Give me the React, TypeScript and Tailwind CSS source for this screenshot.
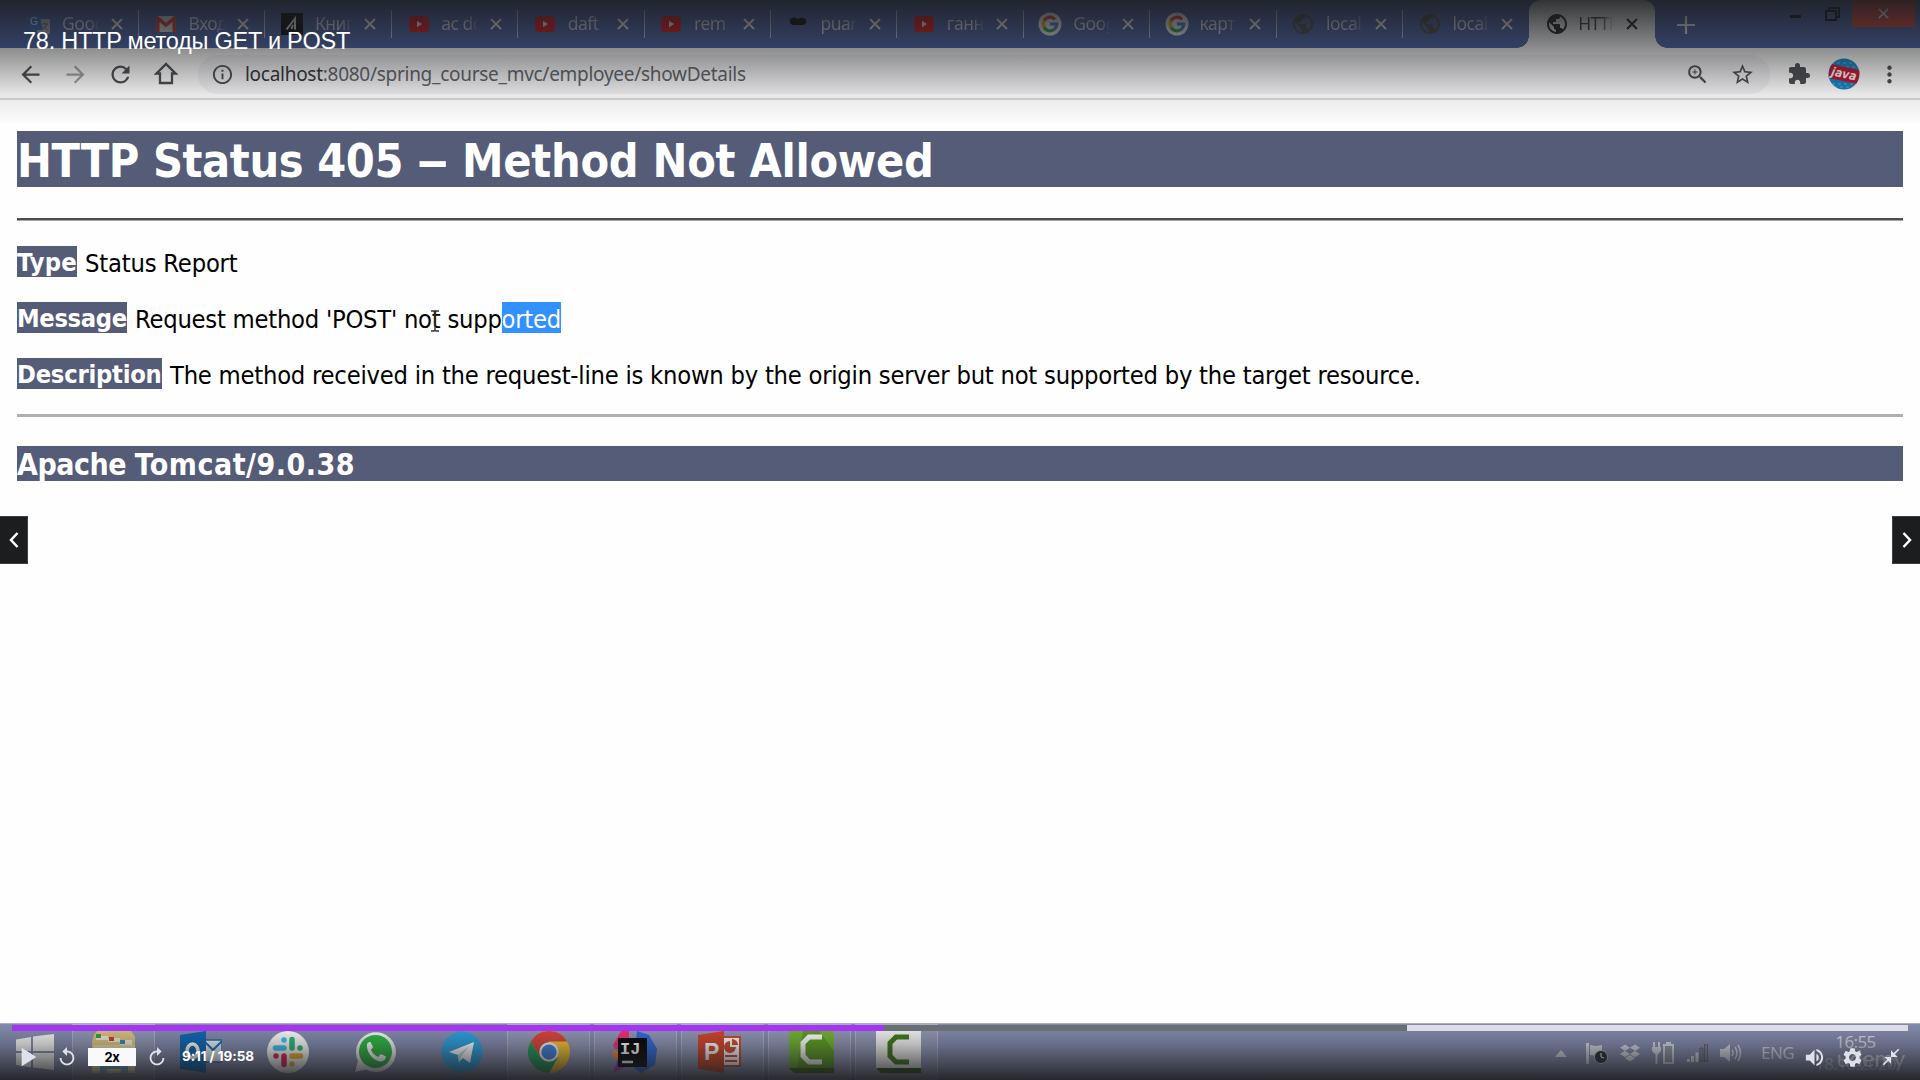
import type { ReactNode } from 'react';
import {
  MdArrowBack, MdArrowForward, MdRefresh, MdInfoOutline, MdZoomIn, MdStarBorder, MdExtension,
  MdMoreVert, MdPublic, MdReplay, MdPlayArrow, MdVolumeUp, MdSettings, MdCloseFullscreen,
} from 'react-icons/md';
import { FaDropbox } from 'react-icons/fa6';

const YouTube = () => (
  <svg viewBox="0 0 20 16" className="h-4 w-5">
    <rect width="20" height="16" rx="4" fill="#e8141c" />
    <path d="M8 4.8v6.4l5-3.2z" fill="#fff" />
  </svg>
);

const Gmail = () => (
  <svg viewBox="0 0 20 16" className="h-4 w-5">
    <rect width="20" height="16" rx="1.5" fill="#e6e6e6" />
    <path d="M1.8 16V2.2L10 9l8.2-6.8V16" fill="none" stroke="#dd3b30" strokeWidth="3.4" />
  </svg>
);

const Translate = () => (
  <svg viewBox="0 0 22 20" className="h-5 w-[22px]">
    <rect x="9" y="5" width="13" height="15" rx="1" fill="#b9bdc4" />
    <path d="M1 0h10l4 16H1z" fill="#3a6fd8" />
    <text x="2" y="11" fontSize="10" fontFamily="Liberation Sans" fill="#fff">G</text>
    <path d="M14 10h6M17 8.5v1.5M19 10c-.6 2.5-2 4-4 5M15.5 12l4 4" stroke="#666" fill="none" />
  </svg>
);

const Book = () => (
  <svg viewBox="0 0 22 22" className="size-[22px]">
    <rect width="22" height="22" fill="#050608" />
    <path d="M5.500 16.500 14 5.500V16.500M10.500 16 12 12" stroke="#eee" strokeWidth="2" fill="none" />
  </svg>
);

const Mustache = () => (
  <svg viewBox="0 0 18 16" className="h-4 w-[18px]">
    <path d="M1 3q4-3 8 0 4-3 8 0 1 6-4 6H5Q0 9 1 3z" fill="#05070d" />
  </svg>
);

const Google = () => (
  <svg viewBox="0 0 24 24" className="size-6">
    <circle cx="12" cy="12" r="11.5" fill="#fff" />
    <g fill="none" strokeWidth="3.2">
      <path d="M17 7.4A6.8 6.8 0 0 0 6.1 8.6" stroke="#ea4335" />
      <path d="M6.1 8.6a6.8 6.8 0 0 0 0 6.8" stroke="#fbbc05" />
      <path d="M6.1 15.4a6.8 6.8 0 0 0 10.4 1.7" stroke="#34a853" />
      <path d="M16.5 17.1A6.8 6.8 0 0 0 18.8 12H12" stroke="#4285f4" />
    </g>
  </svg>
);

const Close = ({ className }: { className: string }) => (
  <svg viewBox="0 0 12 12" className={className}>
    <path d="M1 1l10 10M11 1L1 11" stroke="currentColor" strokeWidth="2" />
  </svg>
);

const Globe = () => <MdPublic className="size-6 text-[#4a4f45]" />;

const tabs: { icon: ReactNode; title: string }[] = [
  { icon: <Translate />, title: 'Goog' },
  { icon: <Gmail />, title: 'Вход' },
  { icon: <Book />, title: 'Книг' },
  { icon: <YouTube />, title: 'ac do' },
  { icon: <YouTube />, title: 'daft |' },
  { icon: <YouTube />, title: 'rem' },
  { icon: <Mustache />, title: 'puar' },
  { icon: <YouTube />, title: 'ганн' },
  { icon: <Google />, title: 'Goog' },
  { icon: <Google />, title: 'карт' },
  { icon: <Globe />, title: 'local' },
  { icon: <Globe />, title: 'local' },
];

function TabStrip() {
  return (
    <div className="flex h-12 bg-[#4c66ae] pl-[12.6px] font-['Noto_Sans',sans-serif] text-[17.5px] leading-none">
      {tabs.map((t, i) => (
        <div key={i} className="flex h-full w-[126.4px] shrink-0 items-center">
          <span className="flex w-[49.5px] shrink-0 justify-center pl-1">{t.icon}</span>
          <span className="w-10 whitespace-nowrap bg-linear-to-r from-[#e6e9f0] from-65% to-transparent to-95% bg-clip-text py-1 tracking-[-0.5px] text-transparent">
            {t.title}
          </span>
          <Close className="ml-[9px] size-3 text-white" />
          <span className={i === tabs.length - 1 ? 'hidden' : 'ml-auto h-7 w-px bg-[#c8d0e8]'} />
        </div>
      ))}
      <div className="relative flex h-full w-[126px] shrink-0 items-center rounded-t-xl bg-white">
        <span className="absolute bottom-0 -left-3 size-3 bg-[radial-gradient(circle_at_0_0,transparent_11.5px,white_12px)]" />
        <span className="absolute -right-3 bottom-0 size-3 bg-[radial-gradient(circle_at_100%_0,transparent_11.5px,white_12px)]" />
        <span className="flex w-[49px] shrink-0 justify-center pl-1.5"><MdPublic className="size-6 text-[#202124]" /></span>
        <span className="w-10 whitespace-nowrap bg-linear-to-r from-[#3c4043] from-55% to-transparent to-90% bg-clip-text py-1 tracking-[-0.8px] text-transparent">
          HTTP
        </span>
        <Close className="ml-2 size-3 text-[#202124]" />
      </div>
      <svg viewBox="0 0 18 18" className="mt-4 ml-[22px] size-[18px] shrink-0"><path d="M9 0v18M0 9h18" stroke="#fff" strokeWidth="2.2" /></svg>
      <div className="ml-auto flex h-7 items-center">
        <span className="mt-1 mr-6 h-[3px] w-[11px] bg-[#10131f]" />
        <svg viewBox="0 0 15 14" className="mr-3 h-3.5 w-[15px]"><path d="M1 4h10v9H1zM4 4V1h10v9h-3" fill="none" stroke="#10131f" strokeWidth="2" /></svg>
        <div className="mr-[5px] flex h-[27px] w-[63px] items-center justify-center self-start bg-[#e0463f]">
          <Close className="size-[11px] text-white" />
        </div>
      </div>
    </div>
  );
}

function AddressBar() {
  return (
    <div className="flex h-[52px] items-center border-b-2 border-[#d9dadb] bg-white pt-0.5 text-[#4b4d51]">
      <MdArrowBack className="ml-[17px] size-[27px]" />
      <MdArrowForward className="ml-[18px] size-[27px] text-[#a3a4a7]" />
      <MdRefresh className="ml-[18px] size-[27px]" />
      <svg viewBox="0 0 24 24" className="ml-[20px] size-6">
        <path d="M12 2 2.5 11.5H6V21h12v-9.5h3.5z" fill="none" stroke="currentColor" strokeWidth="2.3" />
      </svg>
      <div className="ml-5 flex h-[39px] w-[1572px] items-center rounded-full bg-[#f4f4f6] pl-[13px]">
        <MdInfoOutline className="size-[23px]" />
        <span className="ml-[11px] font-['Noto_Sans',sans-serif] text-[19px] leading-none tracking-[-0.28px] text-[#5f6368]">
          <span className="text-[#303236]">localhost</span>:8080/spring_course_mvc/employee/showDetails
        </span>
        <MdZoomIn className="ml-auto size-[25px]" />
        <MdStarBorder className="mr-[15px] ml-5 size-[25px]" />
      </div>
      <MdExtension className="ml-[17px] size-6" />
      <svg viewBox="0 0 32 32" className="ml-[17px] size-8">
        <defs><clipPath id="avatar"><circle cx="16" cy="16" r="15.5" /></clipPath></defs>
        <g clipPath="url(#avatar)">
          <rect width="32" height="32" fill="#1783c4" />
          <path d="M0 9h32M3 5h28M4 26h25M0 29h32" stroke="#5cb6e0" strokeDasharray="3 3" />
          <g transform="rotate(12 16 16)">
            <rect x="1" y="9" width="30" height="14" fill="#c8122c" />
            <text x="16" y="20" textAnchor="middle" fontSize="12" fontWeight="700" fontStyle="italic" fontFamily="DejaVu Sans Condensed" fill="#fff">java</text>
          </g>
        </g>
      </svg>
      <MdMoreVert className="ml-4 size-[27px]" />
    </div>
  );
}

const Label = ({ className, children }: { className: string; children: ReactNode }) => (
  <b className={'flex h-[31px] shrink-0 items-center bg-[#545c78] pt-[3px] leading-none text-white ' + className}>{children}</b>
);

function ErrorPage() {
  return (
    <div className="h-[923px] bg-[#fefefe] px-[17px] pt-[31px] font-['DejaVu_Sans_Condensed','DejaVu_Sans',sans-serif] text-black">
      <h1 className="h-14 bg-[#545c78] text-[46.4px] leading-[60px] font-bold tracking-[-0.3px] whitespace-nowrap text-white">
        <span className="tracking-[-0.42px]">HTTP Status 405</span>
        <span className="inline-block w-[59px] scale-x-[1.6] text-center whitespace-pre"> – </span>
        <span>Method Not Allowed</span>
      </h1>
      <div className="mt-[31px] h-[3px] border-b border-[#a5a5ab] bg-[#4c4c55]" />
      <div className="mt-[25px] flex flex-col gap-[25px] text-[25.3px] leading-[35px] whitespace-nowrap">
        <p className="flex h-[31px] tracking-[-0.2px]"><Label className="mr-2 w-[60px] tracking-[0.2px]">Type</Label>Status Report</p>
        <p className="relative flex h-[31px] tracking-[-0.25px]">
          <Label className="mr-2 w-[110px] tracking-[-0.35px]">Message</Label>
          <span>Request method 'POST' not supp</span>
          <span className="h-[31px] bg-[#3390ff] text-white">orted</span>
          <svg viewBox="0 0 10 22" className="absolute top-2 left-[413px] h-[22px] w-2.5">
            <path d="M1 1h3l1 1 1-1h3M5 2v18M1 21h3l1-1 1 1h3" fill="none" stroke="#333" strokeWidth="1.4" />
          </svg>
        </p>
        <p className="flex h-[31px] tracking-[-0.24px]">
          <Label className="mr-2 w-[145px]">Description</Label>
          The method received in the request-line is known by the origin server but not supported by the target resource.
        </p>
      </div>
      <div className="mt-[25px] h-[3px] bg-[#b0b0b0]" />
      <h3 className="mt-[29px] h-[35px] bg-[#545c78] text-[30px] leading-[37px] font-bold tracking-[0.5px] text-white">
        <span className="tracking-[-0.5px]">Apache </span>Tomcat/9.0.38
      </h3>
    </div>
  );
}

const Explorer = () => (
  <svg viewBox="0 0 48 42" className="h-[42px] w-12">
    <path d="M4 4l3-4h34l4 6v36H2V10z" fill="#d9c383" />
    <path d="M6 5h12v4H6zM18 7h12v4H18zM30 9h12v5H30z" fill="#f1ead2" />
    <path d="M6 3h5v4H6z" fill="#3f9c46" /><path d="M19 6h5v4h-5z" fill="#c6442e" /><path d="M30 9h5v4h-5z" fill="#3a86c0" />
    <path d="M3 14h42v26H3z" fill="#ead9a0" />
    <path d="M10 42v-7h28v7h-7v-4H17v4z" fill="#6ba6cf" />
  </svg>
);
const Outlook = () => (
  <svg viewBox="0 0 42 42" className="size-[42px]">
    <path d="M24 9h18v22H24z" fill="#e9f1f8" stroke="#1b6db4" strokeWidth="1.5" />
    <path d="M24 10l9 9 9-9" fill="none" stroke="#1b6db4" strokeWidth="2" />
    <path d="M0 4 26 0v42L0 38z" fill="#0d66b4" />
    <ellipse cx="12.5" cy="20" rx="5.5" ry="7" fill="none" stroke="#fff" strokeWidth="3.5" />
  </svg>
);
const Slack = () => (
  <svg viewBox="0 0 42 42" className="size-[42px]">
    <circle cx="21" cy="21" r="21" fill="#fafafa" />
    <g strokeWidth="5.5" strokeLinecap="round">
      <path d="M17 9v.1M8.5 17H17" stroke="#36c5f0" /><path d="M25 8.5V17M33 17v.1" stroke="#2eb67d" />
      <path d="M25 25h8.5M25 33v.1" stroke="#ecb22e" /><path d="M17 25v8.5M9 25v.1" stroke="#e01e5a" />
    </g>
  </svg>
);
const WhatsApp = () => (
  <svg viewBox="0 0 42 42" className="size-[42px]">
    <path d="M1 41l3-11A20 20 0 1 1 12 38.5z" fill="#f2f5f2" />
    <circle cx="21.5" cy="20.5" r="16.5" fill="#2cb742" />
    <path d="M13 13c2-3 4-2 4-1l2 4c0 1-2 2-2 3 2 4 4 5 7 7 1 0 2-3 3-3l5 2.5c0 3-3 5-6 5-7-1-14-9-13-17.5z" fill="#fff" />
  </svg>
);
const Telegram = () => (
  <svg viewBox="0 0 42 42" className="size-[42px]">
    <circle cx="21" cy="21" r="20.5" fill="#2b9fdb" />
    <path d="M8 21 33 11l-4 21-7-5-4 4-1-7z" fill="#fff" /><path d="M17 24l11-9-8 11-2 5z" fill="#c5d9e8" />
  </svg>
);
const Chrome = () => (
  <svg viewBox="0 0 42 42" className="size-[42px]">
    <circle cx="21" cy="21" r="21" fill="#f5c431" />
    <path d="M2.8 10.5A21 21 0 0 1 39.2 10.5H21L12 26z" fill="#d9453a" />
    <path d="M2.8 10.5A21 21 0 0 0 21 42l9-15.5-18-.5z" fill="#22995a" />
    <circle cx="21" cy="21" r="9.8" fill="#f4f4f4" /><circle cx="21" cy="21" r="7.6" fill="#3f80e0" />
  </svg>
);
const IntelliJ = () => (
  <svg viewBox="0 0 46 42" className="mr-1 h-[42px] w-[46px]">
    <path d="M2 14 10 0h8v18H4z" fill="#f0307a" /><path d="M1 20l9 0v10l-7-3z" fill="#f58a2c" />
    <path d="M26 0l12 4 8 14-2 16-14 8-8-6z" fill="#2f6bdc" /><path d="M2 42l6-18 10 10z" fill="#b13bc4" />
    <rect x="7" y="7" width="29" height="29" fill="#08080a" />
    <text x="9" y="23" fontSize="17" fontWeight="700" fontFamily="Liberation Mono" fill="#fff">IJ</text>
    <path d="M11 31h11" stroke="#fff" strokeWidth="2.5" />
  </svg>
);
const PowerPoint = () => (
  <svg viewBox="0 0 44 42" className="mr-1.5 h-[42px] w-11">
    <path d="M24 6h18v29H24z" fill="#fff" stroke="#cf4a2c" strokeWidth="2" />
    <path d="M32 10a6 6 0 1 0 6 6h-6z" fill="#cf4a2c" /><path d="M34 8a6 6 0 0 1 6 6h-6z" fill="#cf4a2c" />
    <path d="M27 25h12M27 30h12" stroke="#cf4a2c" strokeWidth="2" />
    <path d="M0 4 26 0v42L0 38z" fill="#d0452a" />
    <text x="6" y="29" fontSize="23" fontWeight="700" fontFamily="Liberation Sans" fill="#fff">P</text>
  </svg>
);
const Camtasia = ({ light }: { light?: boolean }) => (
  <svg viewBox="0 0 45 43" className="ml-1 h-[43px] w-[45px]">
    <rect width="45" height="38" fill={light ? '#f2f2f2' : '#5c9e22'} />
    {!light && <path d="M0 0h14l-6 38H0zM30 0h15v20z" fill="#72b331" />}
    <path d="M0 37h45l0 5H5z" fill={light ? '#2c5812' : '#356b10'} />
    <path d="M33 8H20l-6 6v13l6 6h13" transform="translate(0 -2)" fill="none" stroke={light ? '#3d7a18' : '#fff'} strokeWidth="5" />
  </svg>
);

const apps: { icon: ReactNode; open: boolean }[] = [
  { icon: <Explorer />, open: true },
  { icon: <Outlook />, open: false },
  { icon: <Slack />, open: false },
  { icon: <WhatsApp />, open: false },
  { icon: <Telegram />, open: false },
  { icon: <Chrome />, open: true },
  { icon: <IntelliJ />, open: true },
  { icon: <PowerPoint />, open: true },
  { icon: <Camtasia />, open: true },
  { icon: <Camtasia light />, open: true },
];

function Taskbar() {
  return (
    <div className="flex h-[57px] items-center border-t border-[#a9aec6] bg-[#838bad] font-['Noto_Sans',sans-serif]">
      <svg viewBox="0 0 38 36" className="mr-4 ml-4 h-9 w-[38px] shrink-0">
        <path d="M0 5.5 15 3v14H0zM17 2.6 38 0v17H17zM0 19h15v14.5L0 31zM17 19h21v17l-21-2.5z" fill="#f2f2f2" />
      </svg>
      {apps.map((a, i) => (
        <div key={i} className="flex h-full w-[87px] shrink-0 justify-center">
          <span className={a.open ? 'flex h-full w-[83px] justify-center border border-[#a9aec6] bg-[#9096b4] pt-1.5' : 'flex h-full w-[83px] justify-center pt-[7px]'}>
            {a.icon}
          </span>
        </div>
      ))}
      <div className="ml-auto flex h-full items-center pt-0.5 text-[#d6d8e2]">
        <svg viewBox="0 0 12 7" className="mr-[18px] h-[7px] w-3"><path d="M0 7 6 0l6 7z" fill="currentColor" /></svg>
        <svg viewBox="0 0 23 24" className="mr-3 h-6 w-[23px]">
          <path d="M1 2h3v21H1zM5 4l6 1 6-1v10l-6 1-6-1z" fill="currentColor" />
          <circle cx="16" cy="16" r="6.5" fill="#2b2e3c" stroke="#b9bccb" /><path d="M16 12v4l3 1" stroke="#fff" fill="none" />
        </svg>
        <FaDropbox className="mr-3 size-5" />
        <svg viewBox="0 0 22 24" className="mr-3 h-6 w-[22px]">
          <path d="M2 1v5M7 1v5M4.5 12v11" stroke="currentColor" strokeWidth="2" /><path d="M0 6h9v4l-3 3H3l-3-3z" fill="currentColor" />
          <rect x="12" y="4" width="9" height="18" fill="#8f94a8" stroke="currentColor" strokeWidth="2" /><path d="M14 1h5v3h-5z" fill="currentColor" />
        </svg>
        <svg viewBox="0 0 22 18" className="mr-3 h-[18px] w-[22px]">
          <path d="M1 15h3v3H1zM5 12h3v6H5zM9.5 8.5h3V18h-3z" fill="currentColor" />
          <path d="M14 4h3v14h-3zM18.5 0h3v18h-3z" fill="#7c8196" stroke="#3c4052" strokeWidth=".5" />
        </svg>
        <svg viewBox="0 0 22 18" className="mr-[19px] h-[18px] w-[22px]">
          <path d="M0 5h4l6-5v18l-6-5H0z" fill="currentColor" />
          <path d="M12 6q2 3 0 6M15 3q4 6 0 12M18 1q5 8 0 16" fill="none" stroke="currentColor" strokeWidth="1.5" />
        </svg>
        <span className="w-[33px] text-[17px] tracking-[-0.5px]">ENG</span>
        <div className="mr-[26px] ml-[23px] flex w-[77px] flex-col items-center gap-1 text-[17px] leading-[18px] tracking-[-0.6px]">
          <span>16:55</span>
          <span className="opacity-60">18.10.2020</span>
        </div>
      </div>
    </div>
  );
}

function PlayerControls() {
  return (
    <div className="absolute inset-x-0 bottom-0 h-[55px] px-3 text-[#dfe1ea]">
      <div className="flex h-1.5">
        <div className="w-[872px] bg-[#a435f0]" />
        <div className="w-[523px] bg-[#6a6f73]" />
        <div className="flex-1 bg-[#dcdce6]" />
      </div>
      <div className="flex h-[52px] items-center">
        <MdPlayArrow className="ml-[-1px] size-8" />
        <MdReplay className="ml-[13px] size-[22px]" />
        <div className="ml-[10px] flex h-[18px] w-12 items-center justify-center bg-[#f7f9fa] font-['Inter',sans-serif] text-[13px] leading-none font-bold tracking-[-0.4px] text-black">2x</div>
        <MdReplay className="ml-[10px] size-[22px] -scale-x-100" />
        <span className="ml-3.5 font-['Inter',sans-serif] text-[13.5px] leading-none font-bold tracking-[-0.1px] text-white">9:11 / 19:58</span>
        <MdVolumeUp className="ml-auto size-[23px]" />
        <MdSettings className="ml-[15px] size-[23px]" />
        <MdCloseFullscreen className="mr-[7px] ml-[17px] size-[20px]" />
      </div>
    </div>
  );
}

export default function App() {
  return (
    <div className="relative h-[1080px] w-[1920px] overflow-hidden bg-white">
      <TabStrip />
      <AddressBar />
      <ErrorPage />
      <Taskbar />

      <span className="absolute right-[15px] bottom-2.5 font-['Lato',sans-serif] text-[23px] leading-none text-white/60">udemy</span>
      <div className="absolute inset-x-0 top-0 h-[125px] bg-[linear-gradient(rgba(28,29,31,0.9)_0%,rgba(28,29,31,0.47)_42%,rgba(28,29,31,0.1)_76%,transparent_100%)]" />
      <div className="absolute inset-x-0 bottom-0 h-[56px] bg-[linear-gradient(rgba(28,29,31,0)_0%,rgba(28,29,31,0.25)_35%,rgba(28,29,31,0.9)_100%)]" />
      <p className="absolute top-[25px] left-[23px] font-['Liberation_Sans',sans-serif] text-[23.5px] leading-8 tracking-[-0.24px] whitespace-nowrap text-white">
        78. HTTP методы GET и POST
      </p>
      <button className="absolute top-[516px] left-0 flex h-12 w-7 items-center justify-center border border-l-0 border-[#3e4143] bg-[#1c1d1f] text-white">
        <svg viewBox="0 0 10 16" className="h-4 w-2.5"><path d="M8.5 1 2 8l6.5 7" fill="none" stroke="currentColor" strokeWidth="2.5" /></svg>
      </button>
      <button className="absolute top-[516px] right-0 flex h-12 w-7 items-center justify-center border border-r-0 border-[#3e4143] bg-[#1c1d1f] text-white">
        <svg viewBox="0 0 10 16" className="h-4 w-2.5"><path d="M1.5 1 8 8l-6.5 7" fill="none" stroke="currentColor" strokeWidth="2.5" /></svg>
      </button>
      <PlayerControls />
    </div>
  );
}
